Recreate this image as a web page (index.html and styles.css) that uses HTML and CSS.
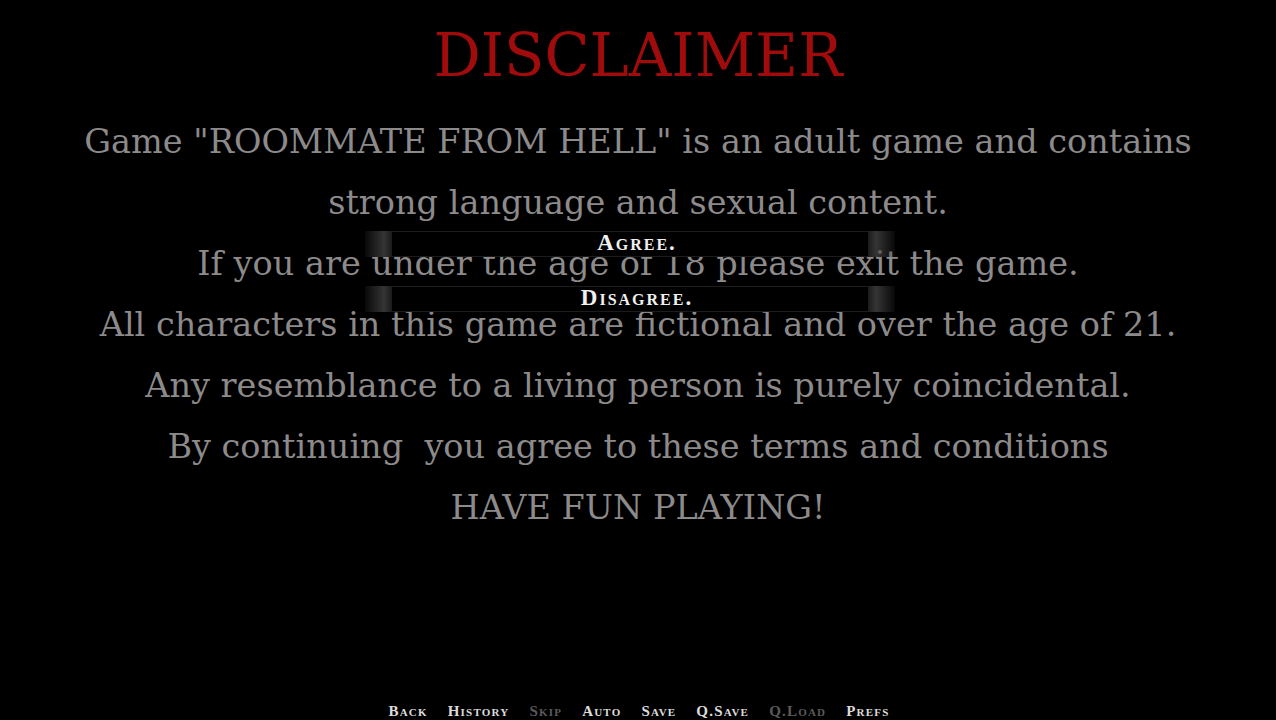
FILE: index.html
```html
<!DOCTYPE html>
<html>
<head>
<meta charset="utf-8">
<link rel="stylesheet" href="styles.css">
</head>
<body>
<div class="screen">
  <h1 class="title">DISCLAIMER</h1>
  <div class="text">
    <p>Game "ROOMMATE FROM HELL" is an adult game and contains</p>
    <p>strong language and sexual content.</p>
    <p>If you are under the age of 18 please exit the game.</p>
    <p>All characters in this game are fictional and over the age of 21.</p>
    <p>Any resemblance to a living person is purely coincidental.</p>
    <p>By continuing&nbsp; you agree to these terms and conditions</p>
    <p>HAVE FUN PLAYING!</p>
  </div>
  <div class="choices">
    <div class="choice"><span class="glow left"></span><span class="bar">Agree.</span><span class="glow right"></span></div>
    <div class="choice"><span class="glow left"></span><span class="bar">Disagree.</span><span class="glow right"></span></div>
  </div>
  <nav class="quick">
    <span>Back</span>
    <span>History</span>
    <span class="off">Skip</span>
    <span>Auto</span>
    <span>Save</span>
    <span>Q.Save</span>
    <span class="off">Q.Load</span>
    <span>Prefs</span>
  </nav>
</div>
</body>
</html>
```
FILE: styles.css
```css
html, body {
  margin: 0;
  padding: 0;
  background: #000;
}
.screen {
  position: relative;
  width: 1276px;
  height: 720px;
  overflow: hidden;
  background: #000;
  display: flex;
  flex-direction: column;
  align-items: center;
  font-family: "DejaVu Serif", "Liberation Serif", serif;
}
.title {
  margin: 20px 0 0 0;
  font-family: "DejaVu Serif", serif;
  font-weight: normal;
  font-size: 59px;
  line-height: 72px;
  color: #a00b0b;
}
.text {
  margin-top: 19px;
  text-align: center;
  color: #8c8a8a;
  font-size: 33.5px;
  line-height: 61px;
}
.text p {
  margin: 0;
  white-space: nowrap;
}
.choices {
  position: absolute;
  left: 365px;
  top: 231px;
  width: 530px;
  display: flex;
  flex-direction: column;
  gap: 29px;
}
.choice {
  display: flex;
  height: 26px;
  align-items: stretch;
}
.choice .bar {
  flex: 1;
  background: #000;
  color: #f0f0f0;
  font-family: "Liberation Serif", serif;
  font-weight: bold;
  font-variant: small-caps;
  font-size: 23px;
  line-height: 22px;
  text-align: center;
  letter-spacing: 2px;
  padding-left: 14px;
  border-top: 1px solid #1c1c1c;
  border-bottom: 1px solid #1c1c1c;
}
.choice .glow {
  width: 27px;
}
.choice .glow.left {
  background: linear-gradient(90deg, rgba(40,40,40,0.2), rgba(75,75,75,0.7) 70%, rgba(30,30,30,0.9));
}
.choice .glow.right {
  background: linear-gradient(270deg, rgba(40,40,40,0.2), rgba(75,75,75,0.7) 70%, rgba(30,30,30,0.9));
}
.quick {
  position: absolute;
  left: 0;
  right: 0;
  bottom: 0;
  display: flex;
  justify-content: center;
  gap: 20px;
  font-family: "Liberation Serif", serif;
  font-weight: bold;
  font-variant: small-caps;
  font-size: 15px;
  line-height: 18px;
  letter-spacing: 1.2px;
  color: #dcdcdc;
  padding-left: 2px;
}
.quick .off {
  color: #5a5a5a;
}
```
